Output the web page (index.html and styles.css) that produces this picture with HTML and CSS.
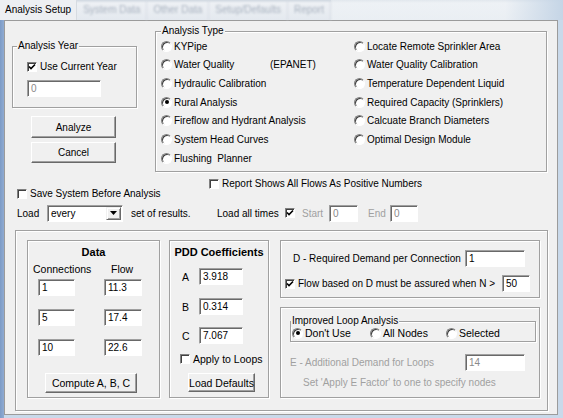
FILE: index.html
```html
<!DOCTYPE html>
<html lang="en">
<head>
    <meta charset="UTF-8">
    <title>Analysis Setup</title>
    <link rel="stylesheet" href="styles.css">
</head>
<body>
    <div class="tabs">
        <span class="tab active">Analysis Setup</span>
        <span class="tab faded">System Data</span>
        <span class="tab faded">Other Data</span>
        <span class="tab faded">Setup/Defaults</span>
        <span class="tab faded">Report</span>
        <span class="tabs-rest"></span>
    </div>

    <div class="panel">
        <div class="top">
            <div class="side">
                <div class="group year-group">
                    <div class="group-title">Analysis Year</div>
                    <div class="check-row year-check"><span class="check"><svg viewBox="0 0 8 8"><path d="M1 3.5 3 5.5 7 1.5"/></svg></span>Use Current Year</div>
                    <span class="field year-field disabled">0</span>
                </div>
                <div class="btn analyze-btn">Analyze</div>
                <div class="btn cancel-btn">Cancel</div>
            </div>

            <div class="group type-group">
                <div class="group-title type-title">Analysis Type</div>
                <div class="radio-grid">
                    <div class="radio-row"><span class="radio"></span>KYPipe</div>
                    <div class="radio-row"><span class="radio"></span><span class="wq">Water Quality</span>(EPANET)</div>
                    <div class="radio-row"><span class="radio"></span>Hydraulic Calibration</div>
                    <div class="radio-row"><span class="radio on"></span>Rural Analysis</div>
                    <div class="radio-row"><span class="radio"></span>Fireflow and Hydrant Analysis</div>
                    <div class="radio-row"><span class="radio"></span>System Head Curves</div>
                    <div class="radio-row"><span class="radio"></span>Flushing&nbsp; Planner</div>
                    <div class="radio-row"><span class="radio"></span>Locate Remote Sprinkler Area</div>
                    <div class="radio-row"><span class="radio"></span>Water Quality Calibration</div>
                    <div class="radio-row"><span class="radio"></span>Temperature Dependent Liquid</div>
                    <div class="radio-row"><span class="radio"></span>Required Capacity (Sprinklers)</div>
                    <div class="radio-row"><span class="radio"></span>Calcuate Branch Diameters</div>
                    <div class="radio-row"><span class="radio"></span>Optimal Design Module</div>
                </div>
            </div>
        </div>

        <div class="options-row">
            <div class="check-row save-check"><span class="check"></span>Save System Before Analysis</div>
            <div class="check-row"><span class="check"></span>Report Shows All Flows As Positive Numbers</div>
        </div>

        <div class="load-row">
            <span class="load-label">Load</span>
            <span class="select">
                <span class="select-text">every</span>
                <span class="drop"><svg width="7" height="4" viewBox="0 0 7 4"><path d="M0 0h7L3.5 4z"/></svg></span>
            </span>
            <span class="results-label">set of results.</span>
            <span class="times-label">Load all times</span>
            <span class="check"><svg viewBox="0 0 8 8"><path d="M1 3.5 3 5.5 7 1.5"/></svg></span>
            <span class="start-label grey">Start</span>
            <span class="field small-field disabled">0</span>
            <span class="end-label grey">End</span>
            <span class="field small-field end-field disabled">0</span>
        </div>

        <div class="group big-group">
            <div class="box data-box">
                <div class="box-title">Data</div>
                <div class="data-head"><span class="conn-label">Connections</span><span>Flow</span></div>
                <div class="data-row"><span class="field conn-field">1</span><span class="field flow-field">11.3</span></div>
                <div class="data-row"><span class="field conn-field">5</span><span class="field flow-field">17.4</span></div>
                <div class="data-row"><span class="field conn-field">10</span><span class="field flow-field">22.6</span></div>
                <div class="btn compute-btn">Compute A, B, C</div>
            </div>

            <div class="box pdd-box">
                <div class="box-title">PDD Coefficients</div>
                <div class="coef-row"><span class="coef-label">A</span><span class="field coef-field">3.918</span></div>
                <div class="coef-row coef-b"><span class="coef-label">B</span><span class="field coef-field">0.314</span></div>
                <div class="coef-row coef-c"><span class="coef-label">C</span><span class="field coef-field">7.067</span></div>
                <div class="check-row loops-check"><span class="check"></span>Apply to Loops</div>
                <div class="btn defaults-btn">Load Defaults</div>
            </div>

            <div class="right-col">
                <div class="box demand-box">
                    <div class="demand-row">
                        <span class="demand-label">D - Required Demand per Connection</span>
                        <span class="field demand-field">1</span>
                    </div>
                    <div class="demand-row assured-row">
                        <span class="check"><svg viewBox="0 0 8 8"><path d="M1 3.5 3 5.5 7 1.5"/></svg></span>
                        <span class="assured-label">Flow based on D must be assured when N &gt;</span>
                        <span class="field n-field">50</span>
                    </div>
                </div>

                <div class="box loop-box">
                    <div class="group loop-group">
                        <div class="group-title loop-title">Improved Loop Analysis</div>
                        <div class="loop-options">
                            <span class="loop-opt opt-1"><span class="radio on"></span>Don't Use</span>
                            <span class="loop-opt opt-2"><span class="radio"></span>All Nodes</span>
                            <span class="loop-opt"><span class="radio"></span>Selected</span>
                        </div>
                    </div>
                    <div class="demand-row extra-row">
                        <span class="extra-label grey">E - Additional Demand for Loops</span>
                        <span class="field demand-field disabled">14</span>
                    </div>
                    <div class="hint grey">Set 'Apply E Factor' to one to specify nodes</div>
                </div>
            </div>
        </div>
    </div>
</body>
</html>
```

FILE: styles.css
```css
* {
    box-sizing: border-box;
}
body {
    margin: 0;
    width: 563px;
    height: 418px;
    overflow: hidden;
    font-family: "Liberation Sans", Arial, sans-serif;
    font-size: 10px;
    color: #000;
    background: linear-gradient(to right, #7d9bc6 0, #8fabd2 4px, #c9d9ea 4px);
}

/* tab strip */
.tabs {
    height: 20px;
    display: flex;
    background: linear-gradient(#cfd7e0, #edf0f4 3px, #e4e9ef);
}
.tab {
    padding: 0 5px;
    line-height: 20px;
    white-space: nowrap;
}
.tab.active {
    background: #edeff2;
    border-right: 1px solid #d6dbe1;
}
.tab.faded {
    color: #a8b2bf;
    filter: blur(0.9px);
    padding: 0 6px;
    border-right: 1px solid #d8dee6;
}
.tabs-rest {
    flex: 1;
    background: linear-gradient(to right, rgba(238, 242, 246, 0.6) 75%, #c5d5e6);
}

/* main panel */
.panel {
    margin-left: 4px;
    width: 554px;
    height: 395px;
    border: 1px solid #9b9b9b;
    background: #f0f0f0;
}

.group, .box {
    border: 1px solid #a0a0a0;
    box-shadow: inset 1px 1px #fff, 1px 1px #fff;
}
.group-title {
    display: table;
    margin: -7px 0 0 4px;
    padding: 0 1px;
    line-height: 12px;
    background: #f0f0f0;
}

.field {
    display: block;
    height: 17px;
    background: #fff;
    border-top: 1px solid #a0a0a0;
    border-left: 1px solid #a0a0a0;
    border-right: 1px solid #fff;
    border-bottom: 1px solid #fff;
    box-shadow: inset 1px 1px #696969;
    padding-left: 3px;
    line-height: 15px;
}
.disabled {
    color: #8a8a8a;
}
.grey {
    color: #a0a0a0;
}

.check {
    display: inline-block;
    flex: none;
    width: 10px;
    height: 10px;
    background: #fff;
    border-top: 1px solid #808080;
    border-left: 1px solid #808080;
    border-right: 1px solid #fff;
    border-bottom: 1px solid #fff;
    box-shadow: inset 1px 1px #404040;
    margin-right: 3px;
}
.check svg {
    display: block;
    width: 8px;
    height: 8px;
}
.check path {
    fill: none;
    stroke: #000;
    stroke-width: 1.6;
}
.check-row {
    display: flex;
    align-items: center;
    height: 13px;
}

.radio {
    display: inline-flex;
    flex: none;
    align-items: center;
    justify-content: center;
    width: 11px;
    height: 11px;
    border-radius: 50%;
    border: 1px solid;
    border-color: #808080 #fff #fff #808080;
    box-shadow: inset 1px 1px #404040;
    background: #fff;
    margin-right: 2px;
}
.radio.on::after {
    content: "";
    width: 4px;
    height: 4px;
    border-radius: 50%;
    background: #000;
}

.btn {
    display: flex;
    align-items: center;
    justify-content: center;
    background: #f0f0f0;
    border-top: 1px solid #fff;
    border-left: 1px solid #fff;
    border-right: 1px solid #696969;
    border-bottom: 1px solid #696969;
    box-shadow: inset -1px -1px #a0a0a0;
}

/* top section */
.top {
    display: flex;
    height: 152px;
}
.side {
    width: 150px;
}
.year-group {
    margin: 25px 0 0 7px;
    width: 125px;
    height: 62px;
}
.year-check {
    margin: 8px 0 0 14px;
}
.year-field {
    margin: 7px 0 0 14px;
    width: 74px;
}
.analyze-btn {
    margin: 8px 0 0 26px;
    width: 85px;
    height: 22px;
}
.cancel-btn {
    margin: 4px 0 0 26px;
    width: 85px;
    height: 21px;
}

.type-group {
    margin-top: 10px;
    width: 392px;
    height: 141px;
}
.type-title {
    margin-left: 5px;
}
.radio-grid {
    display: grid;
    grid-template-columns: 193px 1fr;
    grid-template-rows: repeat(7, 18.67px);
    grid-auto-flow: column;
    padding-left: 5px;
}
.radio-row {
    display: flex;
    align-items: center;
}
.wq {
    display: inline-block;
    width: 96px;
}

/* option rows */
.options-row {
    display: flex;
    align-items: flex-start;
    margin-top: 4px;
    height: 23px;
}
.save-check {
    margin: 10px 0 0 12px;
    width: 192px;
}

.load-row {
    display: flex;
    align-items: center;
    margin-top: 4px;
    height: 18px;
    padding-left: 12px;
}
.load-label {
    width: 30px;
}
.select {
    display: flex;
    align-items: center;
    width: 76px;
    height: 17px;
    background: #fff;
    border-top: 1px solid #a0a0a0;
    border-left: 1px solid #a0a0a0;
    border-right: 1px solid #fff;
    border-bottom: 1px solid #fff;
    box-shadow: inset 1px 1px #696969;
}
.select-text {
    flex: 1;
    padding-left: 3px;
}
.drop {
    display: flex;
    align-items: center;
    justify-content: center;
    width: 15px;
    height: 13px;
    margin-right: 1px;
    background: #f0f0f0;
    border-top: 1px solid #f0f0f0;
    border-left: 1px solid #f0f0f0;
    border-right: 1px solid #696969;
    border-bottom: 1px solid #696969;
    box-shadow: inset 1px 1px #fff, inset -1px -1px #a0a0a0;
}
.results-label {
    margin-left: 8px;
    width: 86px;
}
.times-label {
    width: 68px;
}
.start-label {
    margin-left: 4px;
    width: 27px;
}
.small-field {
    width: 29px;
}
.end-label {
    margin-left: 10px;
    width: 22px;
}
.end-field {
    width: 28px;
}

/* lower group */
.big-group {
    display: flex;
    align-items: flex-start;
    margin: 8px 0 0 10px;
    width: 533px;
    height: 181px;
    padding-top: 9px;
}
.box-title {
    padding-top: 5px;
    line-height: 13px;
    font-size: 11px;
    font-weight: bold;
    text-align: center;
}

.data-box {
    margin-left: 11px;
    width: 133px;
    height: 158px;
}
.data-head {
    display: flex;
    margin-top: 4px;
    padding-left: 5px;
    line-height: 13px;
    font-size: 10.5px;
}
.conn-label {
    width: 78px;
}
.data-row {
    display: flex;
    margin-top: 13px;
}
.data-head + .data-row {
    margin-top: 3px;
}
.conn-field {
    margin-left: 10px;
    width: 37px;
}
.flow-field {
    margin-left: 29px;
    width: 38px;
}
.compute-btn {
    margin: 17px 0 0 17px;
    width: 92px;
    height: 20px;
    font-size: 10.5px;
}

.pdd-box {
    margin-left: 9px;
    width: 100px;
    height: 158px;
}
.coef-row {
    display: flex;
    align-items: center;
    margin: 9px 0 0 12px;
    font-size: 10.5px;
}
.coef-b {
    margin-top: 13px;
}
.coef-c {
    margin-top: 12px;
}
.coef-label {
    width: 17px;
}
.coef-field {
    width: 44px;
    font-size: 10px;
}
.loops-check {
    margin: 8px 0 0 10px;
    font-size: 10.5px;
}
.defaults-btn {
    margin: 8px 0 0 18px;
    width: 67px;
    height: 19px;
    font-size: 10.5px;
}

.right-col {
    margin-left: 11px;
    width: 260px;
}
.demand-box {
    height: 58px;
}
.demand-row {
    display: flex;
    align-items: center;
    margin-top: 9px;
    padding-left: 12px;
}
.demand-label {
    width: 172px;
}
.demand-field {
    width: 60px;
}
.assured-row {
    margin-top: 8px;
    padding-left: 4px;
}
.assured-label {
    width: 204px;
}
.n-field {
    width: 28px;
}

.loop-box {
    margin-top: 9px;
    height: 91px;
}
.loop-group {
    margin: 13px 0 0 9px;
    width: 246px;
    height: 21px;
}
.loop-title {
    margin-left: 0;
}
.loop-options {
    display: flex;
    align-items: center;
    height: 12px;
    padding-left: 1px;
    font-size: 10.5px;
}
.loop-opt {
    display: flex;
    align-items: center;
}
.opt-1 {
    width: 78px;
}
.opt-2 {
    width: 76px;
}
.extra-row {
    margin-top: 12px;
    padding-left: 9px;
}
.extra-label {
    width: 175px;
}
.hint {
    margin: 5px 0 0 22px;
    line-height: 13px;
}
```
